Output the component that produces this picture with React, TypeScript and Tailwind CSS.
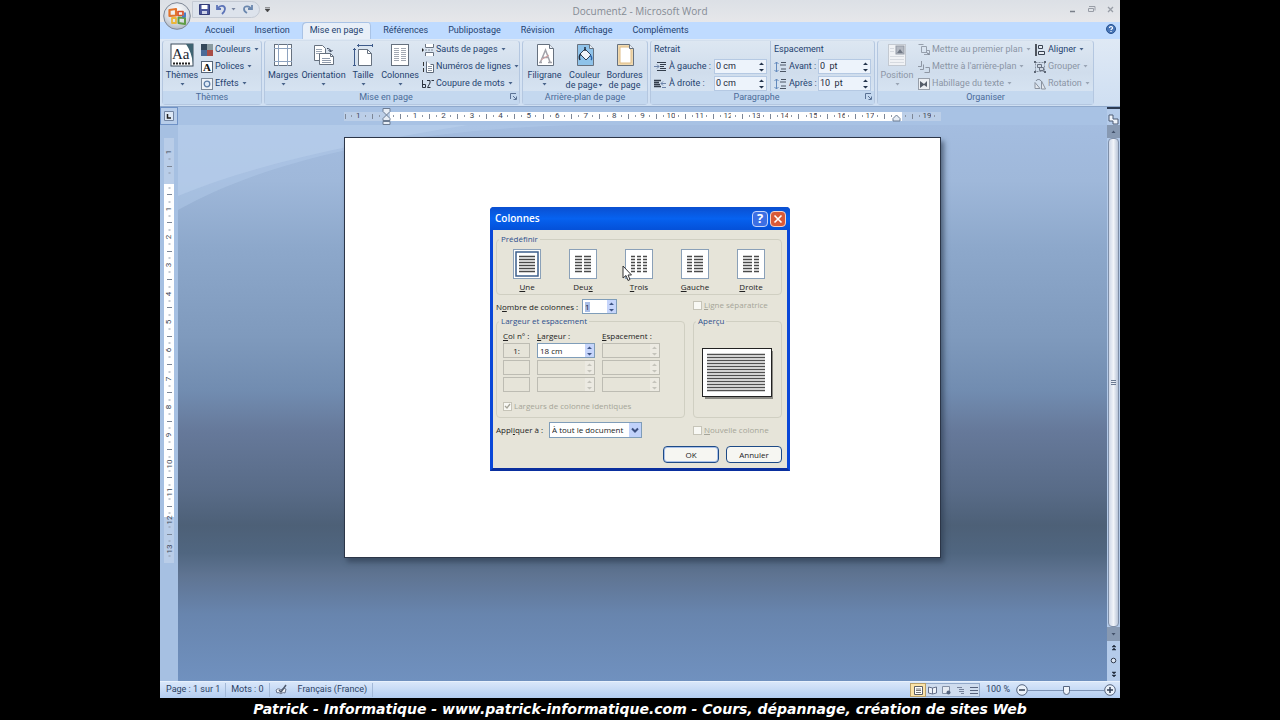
import React, { useState } from 'react';
import { clsx } from 'clsx';

type IconProps = { className?: string };

const tabs = ['Accueil', 'Insertion', 'Mise en page', 'Références', 'Publipostage', 'Révision', 'Affichage', 'Compléments'];

const Caret = ({ className }: IconProps) => (
  <svg viewBox="0 0 5 3" className={clsx('h-[3px] w-[5px] shrink-0', className)}>
    <path d="M.5 0h4L2.500 2.500z" fill="currentColor" fillOpacity=".8" />
  </svg>
);

/* ---------- Ribbon icons ---------- */

const ThemesIcon = () => (
  <svg viewBox="0 0 24 24" className="h-6 w-6">
    <rect x="1" y="1" width="22" height="22" fill="#fff" stroke="#3d4c5c" />
    <path d="M16 1h7v20c-1-8-3-14-7-20z" fill="#3f6472" />
    <text x="2" y="16" fontSize="15" fontFamily="Liberation Serif, serif" fill="#1c2733">Aa</text>
    <path d="M3 20.500h17" stroke="#222" strokeWidth="2" strokeDasharray="2 1" />
  </svg>
);

const MarginsIcon = () => (
  <svg viewBox="0 0 24 24" className="h-6 w-6">
    <rect x="3.500" y="1.500" width="17" height="21" fill="#fff" stroke="#66717f" />
    <path d="M7.500 1v22M16.500 1v22M3 5.500h18M3 18.500h18" stroke="#8ea3bf" fill="none" />
  </svg>
);

const OrientationIcon = () => (
  <svg viewBox="0 0 24 24" className="h-6 w-6">
    <path d="M2.500 2.500h8l3 3v12h-11z" fill="#fff" stroke="#66717f" />
    <path d="M4 6.500h6M4 8.500h6M4 10.500h4" stroke="#9aa5b3" />
    <path d="M7.500 10.500h11l3 3v8h-14z" fill="#fff" stroke="#66717f" />
    <path d="M18.500 10.500v3h3" fill="none" stroke="#66717f" />
    <path d="M10 15.500h8M10 17.500h9M10 19.500h9" stroke="#8f9aab" />
    <path d="M15 5.500c2 0 3.500 .5 3.500 3M16.500 7l2 2 2-2" stroke="#333f55" fill="none" />
  </svg>
);

const SizeIcon = () => (
  <svg viewBox="0 0 24 24" className="h-6 w-6">
    <path d="M7.500 6.500h9l4 4v12h-13z" fill="#fff" stroke="#66717f" />
    <path d="M16.500 6.500v4h4" fill="none" stroke="#66717f" />
    <path d="M6 2.500h16M7.500 1v3M21.500 1v3M3.500 5v18M2 6.500h3M2 22.500h3" stroke="#3d5a8a" fill="none" />
  </svg>
);

const ColumnsIcon = () => (
  <svg viewBox="0 0 24 24" className="h-6 w-6">
    <rect x="3.500" y="1.500" width="17" height="21" fill="#fff" stroke="#66717f" />
    <path d="M6 5.500h5M6 7.500h5M6 9.500h5M6 11.500h5M6 13.500h5M6 15.500h5M6 17.500h5M13 5.500h5M13 7.500h5M13 9.500h5M13 11.500h5M13 13.500h5M13 15.500h5M13 17.500h5" stroke="#a3a9b3" />
  </svg>
);

const PageSheet = ({ fill = '#fff', children }: { fill?: string; children?: React.ReactNode }) => (
  <svg viewBox="0 0 24 24" className="h-6 w-6">
    <path d="M4.500 1.500h12l4 4v17h-16z" fill={fill} stroke="#66717f" />
    {children}
    <path d="M16.500 1.500v4h4" fill="#e8eef6" stroke="#66717f" />
  </svg>
);

const WatermarkIcon = () => (
  <PageSheet>
    <path d="M7.500 19l5-12 4.500 12M9 14.500h6M6 19.500h3M15 19.500h4" stroke="#a3a3aa" strokeWidth="1.500" fill="none" />
    <path d="M8 17l8-5" stroke="#d7a0a0" />
  </PageSheet>
);

const PageColorIcon = () => (
  <PageSheet fill="#8fc3ea">
    <path d="M7 11l5-5 6 6-5 5z" fill="#f1f4f8" stroke="#2f3d52" />
    <path d="M8 11c-2 1-2 4-1 6M12 8V4" stroke="#1f2b3d" strokeWidth="1.500" fill="none" />
    <path d="M17 12c2 2 2 4 1 5" stroke="#2b62a8" strokeWidth="1.500" fill="none" />
  </PageSheet>
);

const BordersIcon = () => (
  <PageSheet fill="#efd9b0">
    <path d="M7 4h9l2 3v13H7z" fill="#fff" stroke="#e0bc84" />
  </PageSheet>
);

const PositionIcon = () => (
  <svg viewBox="0 0 24 24" className="h-6 w-6">
    <rect x="3.500" y="1.500" width="17" height="21" fill="#f0f2f5" stroke="#c3c9d1" />
    <rect x="11" y="3" width="8" height="8" fill="#b4b9c2" stroke="#9299a5" />
    <path d="M12 10l3-4 3 4z" fill="#6f7784" />
    <path d="M5 5.500h4M5 8.500h4M5 13.500h14M5 16.500h14M5 19.500h14" stroke="#d6dae0" />
  </svg>
);

const ColorsIcon = () => (
  <svg viewBox="0 0 12 12" className="h-3 w-3">
    <path d="M0 0h6v6H0z" fill="#33475a" />
    <path d="M6 0h6v6H6z" fill="#8a9aa0" />
    <path d="M0 6h6v6H0z" fill="#4a6a98" />
    <path d="M6 6h6v6H6z" fill="#a94d46" />
  </svg>
);

const FontsIcon = () => (
  <svg viewBox="0 0 12 12" className="h-3 w-3">
    <rect x=".5" y=".5" width="11" height="11" fill="#fff" stroke="#566578" />
    <text x="2" y="10" fontSize="11" fontWeight="bold" fontFamily="Liberation Serif, serif" fill="#111">A</text>
  </svg>
);

const EffectsIcon = () => (
  <svg viewBox="0 0 12 12" className="h-3 w-3">
    <rect x=".5" y=".5" width="11" height="11" fill="#eef3f8" stroke="#7d8a9a" />
    <circle cx="6" cy="6" r="2.800" fill="#dfeaf6" stroke="#5c7ea8" strokeWidth="1.300" />
  </svg>
);

const BreaksIcon = () => (
  <svg viewBox="0 0 12 12" className="h-3 w-3">
    <path d="M3.500 0v3.500h8V0M3.500 12V8.500h8V12" fill="#fff" stroke="#6a7482" />
    <path d="M3 6h9" stroke="#8a94a0" strokeDasharray="2 1" />
    <path d="M0 4l2 2-2 2z" fill="#222" />
  </svg>
);

const LineNumbersIcon = () => (
  <svg viewBox="0 0 12 12" className="h-3 w-3">
    <path d="M1.500 1v4M1.500 7v4" stroke="#333" />
    <path d="M4.500 .5v11h7v-8h-3" fill="#fff" stroke="#5e6a7a" />
    <path d="M6 5.500h4M6 7.500h4M6 9.500h4" stroke="#8994a3" />
  </svg>
);

const HyphenIcon = () => (
  <svg viewBox="0 0 12 12" className="h-3 w-3">
    <path d="M.5 2v7.500h3V6.500h-3M5 2.500h3v2.500L5.500 9.500h3M9.500 2.500h2.500" stroke="#2b3340" fill="none" />
  </svg>
);

const IndentIcon = () => (
  <svg viewBox="0 0 12 10" className="h-[10px] w-3 shrink-0">
    <path d="M3 .5h9M6 2.500h6M6 4.500h4M6 6.500h6M3 8.500h9" stroke="#333d4b" />
    <path d="M0 4.500h5M3 2.500l2 2-2 2" stroke="#6d84aa" fill="none" />
  </svg>
);

const IndentRightIcon = () => (
  <svg viewBox="0 0 12 10" className="h-[10px] w-3 shrink-0">
    <path d="M0 1.500h7M0 3.500h5M0 5.500h6M0 7.500h7" stroke="#333d4b" strokeWidth="1.300" />
    <path d="M12 4.500H7M9 2.500l-2 2 2 2M8 8.500h4" stroke="#6d84aa" fill="none" />
  </svg>
);

const SpacingIcon = () => (
  <svg viewBox="0 0 12 12" className="h-3 w-3 shrink-0">
    <path d="M2.500 1v10M.5 3l2-2 2 2M.5 9l2 2 2-2" stroke="#6289bd" fill="none" />
    <path d="M7 1.500h5M6 4h6M7 8h5M6 10.500h6" stroke="#4b5564" />
  </svg>
);

const FrontIcon = () => (
  <svg viewBox="0 0 12 12" className="h-3 w-3">
    <path d="M.5 .5h5M3.500 2.500h5v6h-5zM8 6.500h3.500v4H6" fill="none" stroke="#97a0ad" />
    <path d="M9 8.500l2 2" stroke="#4e5664" />
  </svg>
);

const BackIcon = () => (
  <svg viewBox="0 0 12 12" className="h-3 w-3">
    <path d="M3.500 0v5.500H0M5.500 3.500v5H2M7.500 6.500h4v5h-5" fill="none" stroke="#8e97a4" />
  </svg>
);

const WrapIcon = () => (
  <svg viewBox="0 0 12 12" className="h-3 w-3">
    <rect x=".5" y=".5" width="11" height="11" fill="#eceff3" stroke="#979faa" />
    <path d="M2 3l4 3 3-3v6l-3-2-4 3z" fill="#555d69" />
  </svg>
);

const AlignIcon = () => (
  <svg viewBox="0 0 12 12" className="h-3 w-3">
    <path d="M2 0v12" stroke="#20262f" strokeWidth="1.500" />
    <path d="M4.500 1.500h4v3h-4zM4.500 7.500h6v3h-6z" fill="#e8edf4" stroke="#394352" />
  </svg>
);

const GroupIcon = () => (
  <svg viewBox="0 0 12 12" className="h-3 w-3">
    <rect x="1.500" y="1.500" width="9" height="9" fill="none" stroke="#8791a0" strokeDasharray="2 1" />
    <path d="M3.500 3.500h4v3h-4zM5.500 6.500h4v3h-4z" fill="#cfd7e2" stroke="#6a7484" />
    <path d="M0 0h2v2H0zM10 0h2v2h-2zM0 10h2v2H0zM10 10h2v2h-2z" fill="#5d6776" />
  </svg>
);

const RotateIcon = () => (
  <svg viewBox="0 0 12 12" className="h-3 w-3">
    <path d="M1 10.500h5l-5-6zM7.500 3v8h4z" fill="#e4e8ee" stroke="#8a93a0" />
    <path d="M2 3c1-2 4-2 5 0" stroke="#6f7886" fill="none" />
  </svg>
);

const OfficeLogo = () => (
  <svg viewBox="0 0 28 28" className="h-7 w-7">
    <defs>
      <radialGradient id="orb" cx=".5" cy=".3" r=".75">
        <stop offset="0" stopColor="#ffffff" />
        <stop offset=".6" stopColor="#d8dde4" />
        <stop offset="1" stopColor="#a9b1bd" />
      </radialGradient>
    </defs>
    <circle cx="14" cy="14" r="13.300" fill="url(#orb)" stroke="#7f8896" />
    <g fill="none" strokeLinejoin="round">
      <path d="M6.500 8l6.500-1v6.500l-6.500 .5z" stroke="#e3742b" strokeWidth="2.200" />
      <path d="M15 9.500h5v4h-5z" stroke="#d8502a" strokeWidth="1.700" />
      <path d="M9 16h4v5H9z" stroke="#eab63a" strokeWidth="1.800" />
      <path d="M15.500 15.500l6.500 .5v6l-6.500-1z" stroke="#5f9d46" strokeWidth="2" />
      <path d="M22 10.500v4h-3" stroke="#4a7cc4" strokeWidth="2" />
    </g>
  </svg>
);

/* ---------- Ribbon building blocks ---------- */

interface BigButtonProps {
  icon: React.ReactNode;
  label: string;
  second?: string;
  caret?: boolean;
  disabled?: boolean;
  className?: string;
}

const BigButton: React.FC<BigButtonProps> = ({ icon, label, second, caret = true, disabled, className }) => (
  <button
    disabled={disabled}
    className={clsx('flex shrink-0 flex-col items-center pt-[2px] leading-[10px] whitespace-nowrap', disabled && 'text-[#8b95a5]', className)}
  >
    {icon}
    <span className="mt-[3px]">{label}</span>
    {second ? (
      <span className="flex items-center gap-px">
        {second}
        {caret && <Caret />}
      </span>
    ) : (
      <Caret className="mt-[3px]" />
    )}
  </button>
);

const SmallButton = ({ icon, label, disabled }: { icon: React.ReactNode; label: string; disabled?: boolean }) => (
  <button
    disabled={disabled}
    className={clsx('flex h-[17px] items-center whitespace-nowrap', disabled && 'text-[#8b95a5]')}
  >
    {icon}
    <span className="ml-[2px]">{label}</span>
    <Caret className="ml-[3px]" />
  </button>
);

const RibbonGroup = ({ title, launcher, className, children }: { title: string; launcher?: boolean; className?: string; children: React.ReactNode }) => (
  <section
    className={clsx(
      'flex shrink-0 flex-col rounded-sm border border-[#b4c7e0] border-t-[#d3dfed] bg-linear-to-b from-[#dde7f2] via-[#d0ddec] to-[#dae7f5]',
      className
    )}
  >
    <div className="flex h-[50px]">{children}</div>
    <h2 className={clsx('relative h-[13px] bg-[#c4d8ef] text-center leading-[13px] text-[#4a6b98]', launcher && 'pr-3')}>
      {title}
      {launcher && (
        <button aria-label={`Options ${title}`} className="absolute right-[2px] top-[2px]">
          <svg viewBox="0 0 7 7" className="h-[7px] w-[7px]">
            <path d="M.5 6V.5H6M3 3l3 3M6.500 3.500v3h-3" fill="none" stroke="#5a7295" />
          </svg>
        </button>
      )}
    </h2>
  </section>
);

const Arrows = ({ className }: IconProps) => (
  <svg viewBox="0 0 9 12" className={clsx('h-3 w-[9px] shrink-0', className)}>
    <path d="M2 4h5L4.500 1.500zM2 8h5l-2.500 2.500z" fill="currentColor" />
  </svg>
);

const RibbonField = ({ icon, label, value, labelClass }: { icon: React.ReactNode; label: string; value: string; labelClass: string }) => {
  const [text, setText] = useState(value);
  return (
    <label className="flex h-[17px] items-center">
      {icon}
      <span className={clsx('ml-[3px] whitespace-nowrap', labelClass)}>{label}</span>
      <span className="flex h-[15px] w-[53px] items-center border border-[#b5c9e3] bg-[#edf3fb]">
        <input className="w-0 flex-1 bg-transparent pl-px text-[#1e2a3c] outline-none" value={text} onChange={(e) => setText(e.target.value)} />
        <Arrows className="text-[#24344c]" />
      </span>
    </label>
  );
};

/* ---------- Rulers ---------- */

type Slot = string;

// four slots per centimetre: dot, half mark, dot, number
const centimetres = (from: number, to: number): Slot[] => {
  const out: Slot[] = [];
  for (let n = from; n <= to; n++) out.push('·', 'ı', '·', String(n));
  return out;
};

const horizontalSlots: Slot[] = ['ı', '·', '1', '·', 'ı', '·', '', ...centimetres(1, 17), '·', 'ı', '·', '', '·', 'ı', '·', '19', '·', ''];
const verticalSlots: Slot[] = ['', '', '1', '·', 'ı', '·', '', ...centimetres(1, 13), '·', ''];

const Tick = ({ slot }: { slot: Slot }) => {
  if (slot === 'ı') return <i className="h-[5px] w-px bg-[#7d8797]" />;
  if (slot === '·') return <i className="h-[2px] w-px bg-[#8e98a6]" />;
  return <span className="text-[8px] leading-none text-[#3c4656]">{slot}</span>;
};

// the strip starts and ends in the middle of a slot
const isEnd = (slots: Slot[], i: number) => i === 0 || i === slots.length - 1;

const HorizontalRuler = () => (
  <div className="relative flex h-[9px] w-[597px]">
    {horizontalSlots.map((slot, i) => (
      <div
        key={i}
        className={clsx(
          'flex w-0 items-center justify-center',
          isEnd(horizontalSlots, i) ? 'flex-[1]' : 'flex-[2]',
          i < 7 || i > 78 ? 'bg-[#bccfe8]' : 'bg-white'
        )}
      >
        <Tick slot={slot} />
      </div>
    ))}
    <svg viewBox="0 0 9 17" className="absolute -top-[4px] left-[38px] h-[17px] w-[9px]">
      <path d="M1 .5h7v3L4.500 7 1 3.500zM4.500 7L8 10.500v2H1v-2zM1 13.500h7v3H1z" fill="#e8eef6" stroke="#6c7c92" />
    </svg>
    <svg viewBox="0 0 9 8" className="absolute right-[40px] top-[2px] h-2 w-[9px]">
      <path d="M4.500 1L8 4.500v2.500H1V4.500z" fill="#e8eef6" stroke="#6c7c92" />
    </svg>
  </div>
);

const VerticalRuler = () => (
  <div className="ml-1 mt-[13px] flex h-[425px] w-[10px] flex-col">
    {verticalSlots.map((slot, i) => (
      <div
        key={i}
        className={clsx(
          'flex h-0 items-center justify-center',
          isEnd(verticalSlots, i) ? 'flex-[1]' : 'flex-[2]',
          i < 7 || i > 53 ? 'bg-[#b9cde8]' : 'bg-white'
        )}
      >
        <span className="flex -rotate-90"><Tick slot={slot} /></span>
      </div>
    ))}
  </div>
);

/* ---------- Columns dialog ---------- */

const presets = [
  { name: 'Une', accel: 0, lines: [[6, 22]] },
  { name: 'Deux', accel: 3, lines: [[6, 13], [15, 22]] },
  { name: 'Trois', accel: 0, lines: [[6, 10], [12, 16], [18, 22]] },
  { name: 'Gauche', accel: 0, lines: [[6, 11], [13, 22]] },
  { name: 'Droite', accel: 0, lines: [[6, 15], [17, 22]] },
];

const Accel = ({ text, at }: { text: string; at: number }) => (
  <>
    {text.slice(0, at)}
    <u className="underline-offset-1">{text[at]}</u>
    {text.slice(at + 1)}
  </>
);

const Spin = ({ value, label, disabled, className }: { value: string; label: string; disabled?: boolean; className?: string }) => (
  <span className={clsx('flex h-[15px] items-center border', disabled ? 'border-[#bdbcb3] bg-[#e6e4d9]' : 'border-[#7f9db9] bg-white', className)}>
    <input aria-label={label} disabled={disabled} defaultValue={value} className="w-0 flex-1 bg-transparent pl-[2px] outline-none" />
    <span className={clsx('flex h-full items-center', disabled ? 'bg-[#eceae2] text-[#c4c3bb]' : 'bg-[#c6d5fb] text-[#3f5586]')}>
      <Arrows />
    </span>
  </span>
);

const Check = ({ label, at, checked }: { label: string; at: number; checked?: boolean }) => (
  <label className="flex items-center gap-[2px] whitespace-nowrap text-[#a5a498]">
    <span className="relative flex">
      <input type="checkbox" disabled defaultChecked={checked} className="h-[9px] w-[9px] appearance-none border border-[#c6c4b8] bg-[#f8f8f4]" />
      {checked && (
        <svg viewBox="0 0 9 9" className="absolute inset-0 h-[9px] w-[9px]">
          <path d="M2 4l2 2 3-4" fill="none" stroke="#a5a498" strokeWidth="1.300" />
        </svg>
      )}
    </span>
    <span><Accel text={label} at={at} /></span>
  </label>
);

const ColumnsDialog: React.FC = () => {
  const [preset, setPreset] = useState('Une');

  return (
    <div
      role="dialog"
      aria-label="Colonnes"
      className="absolute left-1/2 top-[207px] w-[300px] -translate-x-1/2 rounded-t border-[3px] border-t-0 border-[#0a47d8] border-b-[#0a2f9e] bg-[#e6e4d9] font-['Open_Sans','Noto_Sans',sans-serif] text-[8px] text-[#222]"
    >
      <div className="-mx-[3px] flex h-[23px] items-center rounded-t bg-linear-to-b from-[#0a4fd0] via-[#0662f0] to-[#0450d8] pl-[5px] pr-[4px]">
        <h2 className="flex-1 text-[10px] leading-[25px] font-semibold text-white">Colonnes</h2>
        <button aria-label="Aide" className="mr-[2px] flex h-4 w-4 items-center justify-center rounded-sm border border-[#c3d4fb] bg-[#3c6fe4] text-[13px] leading-none font-bold text-white">?</button>
        <button aria-label="Fermer" className="flex h-4 w-4 items-center justify-center rounded-sm border border-[#f1d3cb] bg-[#d95a38]">
          <svg viewBox="0 0 10 10" className="h-[10px] w-[10px]">
            <path d="M1.500 1.500l7 7M8.500 1.500l-7 7" stroke="#fff" strokeWidth="1.600" />
          </svg>
        </button>
      </div>

      <div className="pb-[5px] pl-[3px] pr-[5px] pt-1 leading-[10px]">
        <fieldset className="rounded-sm border border-[#d0cfc2]">
          <legend className="ml-[2px] px-[2px] text-[#2e4f8c]">Prédéfinir</legend>
          <div className="grid grid-cols-5 px-[2px] pb-[1px] pt-[5px]">
            {presets.map((p) => (
              <button key={p.name} onClick={() => setPreset(p.name)} className="flex flex-col items-center">
                <svg viewBox="0 0 28 30" className="h-[30px] w-7">
                  <rect x=".5" y=".5" width="27" height="29" fill="#fff" stroke="#8aa0b8" />
                  {preset === p.name && <rect x="3" y="3" width="22" height="24" fill="none" stroke="#3d5f8c" strokeWidth="1.500" />}
                  {p.lines.map(([a, b]) => (
                    <path key={a} d={`M${a} 7.500H${b}M${a} 10.500H${b}M${a} 13.500H${b}M${a} 16.500H${b}M${a} 19.500H${b}M${a} 22.500H${b}`} stroke="#4a4a4a" strokeWidth="1.600" />
                  ))}
                </svg>
                <span className="mt-[2px] leading-[12px]"><Accel text={p.name} at={p.accel} /></span>
              </button>
            ))}
          </div>
        </fieldset>

        <div className="mt-1 grid grid-cols-[1fr_89px] gap-x-2">
          <div className="flex h-[15px] items-center">
            <span className="w-[86px] whitespace-nowrap"><Accel text="Nombre de colonnes :" at={1} /></span>
            <span className="flex h-[15px] w-[35px] items-center border border-[#7f9db9] bg-white">
              <input aria-label="Nombre de colonnes" defaultValue="1" className="ml-[2px] w-[5px] bg-[#a9bde6] outline-none" />
              <span className="ml-auto flex h-full items-center bg-[#c6d5fb] text-[#3f5586]"><Arrows /></span>
            </span>
          </div>
          <div className="flex h-3 items-center"><Check label="Ligne séparatrice" at={0} /></div>

          <fieldset className="mt-[2px] h-[102px] rounded-sm border border-[#d0cfc2]">
            <legend className="ml-[2px] px-[2px] text-[#2e4f8c]">Largeur et espacement</legend>
            <div className="grid grid-cols-[27px_58px_58px] gap-x-[7px] gap-y-[2px] pl-[6px] pt-[5px]">
              <span className="whitespace-nowrap"><Accel text="Col n° :" at={0} /></span>
              <span><Accel text="Largeur :" at={0} /></span>
              <span><Accel text="Espacement :" at={0} /></span>
              {['1:', '', ''].map((row, i) => (
                <React.Fragment key={i}>
                  <span className="h-[15px] border border-[#bdbcb3] text-center leading-[13px]">{row}</span>
                  <Spin label={`Largeur ${i + 1}`} value={i === 0 ? '18 cm' : ''} disabled={i > 0} />
                  <Spin label={`Espacement ${i + 1}`} value="" disabled />
                </React.Fragment>
              ))}
            </div>
            <div className="mt-[9px] pl-[6px]">
              <Check label="Largeurs de colonne identiques" at={3} checked />
            </div>
          </fieldset>
          <fieldset className="mt-[2px] h-[102px] rounded-sm border border-[#d0cfc2]">
            <legend className="ml-[2px] px-[2px] text-[#2e4f8c]">Aperçu</legend>
            <svg viewBox="0 0 72 52" className="mx-auto mt-[22px] h-[52px] w-[72px]">
              <rect x="3" y="3" width="68" height="48" fill="#8b8a84" />
              <rect x=".5" y=".5" width="69" height="48" fill="#fff" stroke="#222" />
              {Array.from({ length: 13 }, (_, i) => (
                <path key={i} d={`M5 ${6.5 + i * 3}h58`} stroke="#505050" strokeWidth="1.600" />
              ))}
            </svg>
          </fieldset>

          <label className="mt-1 flex h-4 items-center">
            <span className="w-[53px] whitespace-nowrap"><Accel text="Appliquer à :" at={4} /></span>
            <span className="relative flex h-4 w-[93px] border border-[#7f9db9] bg-white">
              <select className="w-full appearance-none bg-transparent pl-[2px] outline-none">
                <option>À tout le document</option>
              </select>
              <svg viewBox="0 0 12 14" className="pointer-events-none absolute right-0 top-0 h-[14px] w-3">
                <path d="M0 0h12v14H0z" fill="#c1d2fa" />
                <path d="M3 5.500l3 3 3-3" fill="none" stroke="#3c5080" strokeWidth="2" />
              </svg>
            </span>
          </label>
          <div className="mt-1 flex h-4 items-center"><Check label="Nouvelle colonne" at={0} /></div>
        </div>

        <div className="mt-2 flex justify-end gap-[7px]">
          <button className="h-[17px] w-14 rounded-sm border border-[#1d4a86] bg-[#f6f6f2] shadow-[inset_0_0_0_1px_#a9c1ea]">OK</button>
          <button className="h-[17px] w-14 rounded-sm border border-[#1d4a86] bg-[#f6f6f2]">Annuler</button>
        </div>
      </div>

      <svg viewBox="0 0 10 17" className="absolute left-[129px] top-[58px] h-[17px] w-[10px]">
        <path d="M1 1v12l3-2.500L6 15.500l2-1-2-4.500h3.500z" fill="#fff" stroke="#333" />
      </svg>
    </div>
  );
};

/* ---------- Window chrome ---------- */

const TitleBar = () => (
  <header className="grid h-[22px] grid-cols-[1fr_auto_1fr] items-center bg-linear-to-b from-[#dce0e6] to-[#e6e7ea]">
    <div className="flex items-center self-start pl-8 pt-px">
      <div className="flex h-[17px] w-[68px] items-center gap-[6px] rounded-r-full border border-[#c4cad4] bg-[#dde3ec] pl-[6px]">
        <button aria-label="Enregistrer">
          <svg viewBox="0 0 11 11" className="h-[11px] w-[11px]">
            <path d="M.5 .5h10v10h-10z" fill="#4a569c" stroke="#333c78" />
            <path d="M2.500 1h6v4h-6z" fill="#fff" />
            <path d="M3 7h5v3H3z" fill="#cdd3e8" />
          </svg>
        </button>
        <button aria-label="Annuler" className="flex items-center gap-1 text-[#5c6b8a]">
          <svg viewBox="0 0 11 11" className="h-[11px] w-[11px]">
            <path d="M2 4c2-3 7-3 7 1 0 2-1 3-3 5M1 1v4h4" fill="none" stroke="#5d74b8" strokeWidth="1.800" />
          </svg>
          <Caret />
        </button>
        <button aria-label="Rétablir">
          <svg viewBox="0 0 11 11" className="h-[11px] w-[11px]">
            <path d="M9 5C8 2 2 1 2 5c0 2 1 3 3 4M10 1v4H6" fill="none" stroke="#6a87ae" strokeWidth="1.800" />
          </svg>
        </button>
      </div>
      <button aria-label="Personnaliser" className="ml-[5px]">
        <svg viewBox="0 0 5 5" className="h-[5px] w-[5px]"><path d="M0 .5h5M0 2h5L2.500 5z" stroke="#444" strokeWidth=".5" fill="#444" /></svg>
      </button>
    </div>
    <h1 className="font-['Open_Sans','Noto_Sans',sans-serif] text-[10px] text-[#858b94]">Document2 - Microsoft Word</h1>
    <div className="flex items-center justify-end gap-[10px] self-start pr-[5px] pt-[5px]">
      <button aria-label="Réduire"><svg viewBox="0 0 9 9" className="h-[9px] w-[9px]"><path d="M2 6.500h5" stroke="#7a808a" strokeWidth="1.500" /></svg></button>
      <button aria-label="Restaurer"><svg viewBox="0 0 9 9" className="h-[9px] w-[9px]"><path d="M2 1.500h6v4M1.500 3.500h5v3h-5z" fill="none" stroke="#989da6" /></svg></button>
      <button aria-label="Fermer"><svg viewBox="0 0 9 9" className="h-[9px] w-[9px]"><path d="M2 2l5 5M7 2L2 7" stroke="#989da6" strokeWidth="1.300" /></svg></button>
    </div>
  </header>
);

const TabStrip = () => {
  const [active, setActive] = useState('Mise en page');
  return (
    <nav className="flex h-[17px] bg-[#bfdbff] pl-[37px] pr-1">
      <div className="flex flex-1 gap-1">
        {tabs.map((tab) => (
          <button
            key={tab}
            onClick={() => setActive(tab)}
            className={clsx('h-full rounded-t px-2 whitespace-nowrap', active === tab && 'bg-[#e8eff8] shadow-[inset_1px_1px_0_#a9c3e6,inset_-1px_0_0_#a9c3e6]')}
          >
            {tab}
          </button>
        ))}
      </div>
      <button aria-label="Aide" className="self-start pt-[2px]">
        <svg viewBox="0 0 10 10" className="h-[10px] w-[10px]">
          <circle cx="5" cy="5" r="4.500" fill="#4876b8" stroke="#27528f" />
          <path d="M3.500 4c0-2 3-2 3 0 0 1-1.500 1-1.500 2M5 7v1" stroke="#fff" strokeWidth="1.200" fill="none" />
        </svg>
      </button>
    </nav>
  );
};

const Ribbon = () => (
  <div className="flex gap-[2px] overflow-hidden border-b border-[#8fa9cc] bg-linear-to-b from-[#dfe9f5] to-[#cfdff2] px-[2px] py-px">
    <RibbonGroup title="Thèmes" className="w-[100px]">
      <BigButton icon={<ThemesIcon />} label="Thèmes" className="w-[38px]" />
      <div>
        <SmallButton icon={<ColorsIcon />} label="Couleurs" />
        <SmallButton icon={<FontsIcon />} label="Polices" />
        <SmallButton icon={<EffectsIcon />} label="Effets" />
      </div>
    </RibbonGroup>
    <RibbonGroup title="Mise en page" launcher className="w-[256px]">
      <BigButton icon={<MarginsIcon />} label="Marges" className="w-9" />
      <BigButton icon={<OrientationIcon />} label="Orientation" className="w-[45px]" />
      <BigButton icon={<SizeIcon />} label="Taille" className="w-[34px]" />
      <BigButton icon={<ColumnsIcon />} label="Colonnes" className="w-10" />
      <div className="ml-[2px]">
        <SmallButton icon={<BreaksIcon />} label="Sauts de pages" />
        <SmallButton icon={<LineNumbersIcon />} label="Numéros de lignes" />
        <SmallButton icon={<HyphenIcon />} label="Coupure de mots" />
      </div>
    </RibbonGroup>
    <RibbonGroup title="Arrière-plan de page" className="w-[126px]">
      <BigButton icon={<WatermarkIcon />} label="Filigrane" className="w-[43px]" />
      <BigButton icon={<PageColorIcon />} label="Couleur" second="de page" className="w-[37px]" />
      <BigButton icon={<BordersIcon />} label="Bordures" second="de page" caret={false} className="w-[43px]" />
    </RibbonGroup>
    <RibbonGroup title="Paragraphe" launcher className="w-[225px]">
      <div className="w-[119px] pl-[3px]">
        <div className="leading-[17px]">Retrait</div>
        <RibbonField icon={<IndentIcon />} label="À gauche :" value="0 cm" labelClass="w-[45px]" />
        <RibbonField icon={<IndentRightIcon />} label="À droite :" value="0 cm" labelClass="w-[45px]" />
      </div>
      <div className="border-l border-[#b3c5dd] pl-[3px]">
        <div className="leading-[17px]">Espacement</div>
        <RibbonField icon={<SpacingIcon />} label="Avant :" value="0  pt" labelClass="w-[29px]" />
        <RibbonField icon={<SpacingIcon />} label="Après :" value="10  pt" labelClass="w-[29px]" />
      </div>
    </RibbonGroup>
    <RibbonGroup title="Organiser" className="w-[217px]">
      <BigButton icon={<PositionIcon />} label="Position" disabled className="w-[38px]" />
      <div className="ml-[2px] w-[114px]">
        <SmallButton icon={<FrontIcon />} label="Mettre au premier plan" disabled />
        <SmallButton icon={<BackIcon />} label="Mettre à l'arrière-plan" disabled />
        <SmallButton icon={<WrapIcon />} label="Habillage du texte" disabled />
      </div>
      <div className="ml-[2px]">
        <SmallButton icon={<AlignIcon />} label="Aligner" />
        <SmallButton icon={<GroupIcon />} label="Grouper" disabled />
        <SmallButton icon={<RotateIcon />} label="Rotation" disabled />
      </div>
    </RibbonGroup>
  </div>
);

const ScrollBar = () => (
  <div className="flex w-[13px] flex-col items-center bg-[#b4cbea]">
    <button aria-label="Défiler vers le haut" className="flex h-[13px] w-full items-center justify-center bg-[#8799b2]">
      <Caret className="rotate-180 text-[#33415a]" />
    </button>
    <div className="flex w-[11px] flex-1 flex-col items-center justify-center gap-px rounded-sm border border-[#7f8fa8] bg-linear-to-r from-[#cfd8e8] via-[#f1f4f9] to-[#b9c5d8]">
      <i className="h-px w-[5px] bg-[#6b7a92]" />
      <i className="h-px w-[5px] bg-[#6b7a92]" />
      <i className="h-px w-[5px] bg-[#6b7a92]" />
    </div>
    <button aria-label="Défiler vers le bas" className="flex h-[14px] w-full items-center justify-center bg-[#8799b2]">
      <Caret className="text-[#33415a]" />
    </button>
    <button aria-label="Page précédente" className="flex h-[13px] items-center"><svg viewBox="0 0 6 7" className="h-[7px] w-[6px]"><path d="M1 3l2-2 2 2zM1 6l2-2 2 2z" fill="#222c3d" stroke="#222c3d" strokeWidth=".5" /></svg></button>
    <button aria-label="Parcourir" className="flex h-[13px] items-center"><svg viewBox="0 0 7 7" className="h-[7px] w-[7px]"><circle cx="3.500" cy="3.500" r="2.300" fill="#dce6f4" stroke="#333d4e" /></svg></button>
    <button aria-label="Page suivante" className="flex h-[14px] items-center"><svg viewBox="0 0 6 7" className="h-[7px] w-[6px]"><path d="M1 1l2 2 2-2zM1 4l2 2 2-2z" fill="#222c3d" stroke="#222c3d" strokeWidth=".5" /></svg></button>
  </div>
);

const ViewIcons = () => (
  <div className="flex h-[14px] items-center border border-[#93a9c9] bg-[#cfdcee]">
    <button aria-label="Page" className="flex h-3 w-[14px] items-center justify-center bg-[#fbe3a8] outline outline-[#b9a06a]">
      <svg viewBox="0 0 9 9" className="h-[9px] w-[9px]"><path d="M.5 .5h8v8h-8z" fill="#fff" stroke="#5d5f66" /><path d="M2 3h5M2 4.500h5M2 6.500h5" stroke="#777" /></svg>
    </button>
    <button aria-label="Lecture" className="flex w-[14px] justify-center">
      <svg viewBox="0 0 9 9" className="h-[9px] w-[9px]"><path d="M.5 1l4 1 4-1v6l-4 1-4-1zM4.500 2v6" fill="#eef2f8" stroke="#65708a" /></svg>
    </button>
    <button aria-label="Web" className="flex w-[14px] justify-center">
      <svg viewBox="0 0 9 9" className="h-[9px] w-[9px]"><path d="M.5 .5h7v7h-7z" fill="#e6ebf3" stroke="#8490a5" /><circle cx="6.500" cy="6.500" r="2" fill="#55647f" /></svg>
    </button>
    <button aria-label="Plan" className="flex w-[14px] justify-center">
      <svg viewBox="0 0 9 9" className="h-[9px] w-[9px]"><path d="M1 1.500h5M3 3.500h5M3 5.500h5M5 7.500h3" stroke="#76829a" /></svg>
    </button>
    <button aria-label="Brouillon" className="flex w-[12px] justify-center">
      <svg viewBox="0 0 9 9" className="h-[9px] w-[9px]"><path d="M1 1.500h8M1 4.500h8M1 7.500h8" stroke="#56627c" strokeWidth="1.200" /></svg>
    </button>
  </div>
);

const StatusBar = () => (
  <footer className="flex h-[17px] items-center border-t border-[#e8f1fd] bg-linear-to-b from-[#d9e7fa] to-[#b3cdf0] text-[#2c3f63]">
    <span className="border-r border-[#a3b9d8] pl-[6px] pr-[5px]">Page : 1 sur 1</span>
    <span className="border-r border-[#a3b9d8] px-[5px]">Mots : 0</span>
    <svg viewBox="0 0 13 12" className="ml-[5px] h-3 w-[13px]">
      <path d="M1 6c2-2 4-1 5 0 1-1 3-2 5-1l-1 4c-2-1-3 0-4 1-1-1-3-2-4-1z" fill="#f3f6fa" stroke="#66718a" />
      <path d="M4 6l2 2 5-7" fill="none" stroke="#4f5a6e" strokeWidth="1.500" />
    </svg>
    <span className="ml-[5px] border-r border-[#a3b9d8] px-[5px]">Français (France)</span>
    <div className="flex flex-1 items-center justify-end pr-[4px]">
      <ViewIcons />
      <span className="mx-[6px] whitespace-nowrap">100 %</span>
      <button aria-label="Zoom arrière">
        <svg viewBox="0 0 12 12" className="h-3 w-3"><circle cx="6" cy="6" r="5.300" fill="#eaf1fa" stroke="#56657f" /><path d="M3 6h6" stroke="#333f55" strokeWidth="1.500" /></svg>
      </button>
      <input
        type="range"
        aria-label="Zoom"
        defaultValue={50}
        className="h-3 w-[76px] appearance-none bg-[linear-gradient(#7d93b5,#7d93b5)] bg-[length:100%_1px] bg-center bg-no-repeat [&::-webkit-slider-thumb]:h-[9px] [&::-webkit-slider-thumb]:w-[7px] [&::-webkit-slider-thumb]:appearance-none [&::-webkit-slider-thumb]:rounded-b-sm [&::-webkit-slider-thumb]:border [&::-webkit-slider-thumb]:border-[#56657f] [&::-webkit-slider-thumb]:bg-[#eef3fa]"
      />
      <button aria-label="Zoom avant">
        <svg viewBox="0 0 12 12" className="h-3 w-3"><circle cx="6" cy="6" r="5.300" fill="#eaf1fa" stroke="#56657f" /><path d="M3 6h6M6 3v6" stroke="#333f55" strokeWidth="1.500" /></svg>
      </button>
    </div>
  </footer>
);

const App: React.FC = () => (
  <div className="flex min-h-screen flex-col bg-black font-[Roboto,'Noto_Sans',sans-serif]">
    <div className="relative mx-auto flex w-3/4 flex-1 flex-col bg-[#bfdbff] text-[9px] text-[#24426f]">
      <TitleBar />
      <TabStrip />
      <button aria-label="Bouton Office" className="absolute left-[3px] top-[2px]"><OfficeLogo /></button>
      <Ribbon />

      {/* Horizontal ruler */}
      <div className="flex h-[18px] items-center bg-[#a8c2e4]">
        <button aria-label="Tabulation" className="flex h-[18px] w-[18px] items-center justify-center border border-[#6f92c6] bg-[#b7cdea]">
          <svg viewBox="0 0 10 10" className="h-[10px] w-[10px]"><path d="M.5 .5h9v9h-9z" fill="#dde8f6" stroke="#7386a4" /><path d="M3.500 3v4H7" fill="none" stroke="#222" strokeWidth="1.500" /></svg>
        </button>
        <div className="flex flex-1 justify-center"><HorizontalRuler /></div>
        <button aria-label="Règle" className="flex h-full w-[13px] items-end justify-center border-t-2 border-[#2d3b52] bg-[#b4cbea]">
          <svg viewBox="0 0 11 11" className="h-[11px] w-[11px]"><path d="M1 1h4v4h5v5H5V7H1z" fill="#eef3fa" stroke="#4d5b73" /></svg>
        </button>
      </div>

      {/* Workspace */}
      <div className="flex flex-1">
        <div className="w-[18px] bg-[#a6c0e2]"><VerticalRuler /></div>
        <div className="relative flex flex-1 items-start justify-center overflow-hidden bg-[linear-gradient(180deg,#a4bde0_0%,#9fb8da_10%,#8da8cb_22%,#7f9abd_38%,#718cb0_48%,#66799a_55%,#586b87_66%,#4d6077_72%,#506680_77%,#5f7492_81%,#6885ae_88%,#7091bf_100%)]">
          <svg viewBox="0 0 400 90" className="absolute left-0 top-0 h-[90px] w-[400px]">
            <path d="M0 0h400C220 5 90 35 0 85z" fill="#b4cbea" fillOpacity=".45" />
            <path d="M0 0h290C180 18 80 38 0 71z" fill="#bcd1ed" fillOpacity=".5" />
          </svg>
          <main className="relative mt-[12px] h-[421px] w-[597px] border border-[#2c3648] bg-white shadow-[3px_4px_5px_#2f3d52aa]" />
        </div>
        <ScrollBar />
      </div>

      <StatusBar />
    </div>
    <p className="h-[22px] text-center font-['DejaVu_Sans',sans-serif] text-[14px] leading-[22px] font-bold italic text-white">
      Patrick - Informatique - www.patrick-informatique.com - Cours, dépannage, création de sites Web
    </p>
    <ColumnsDialog />
  </div>
);

export default App;
